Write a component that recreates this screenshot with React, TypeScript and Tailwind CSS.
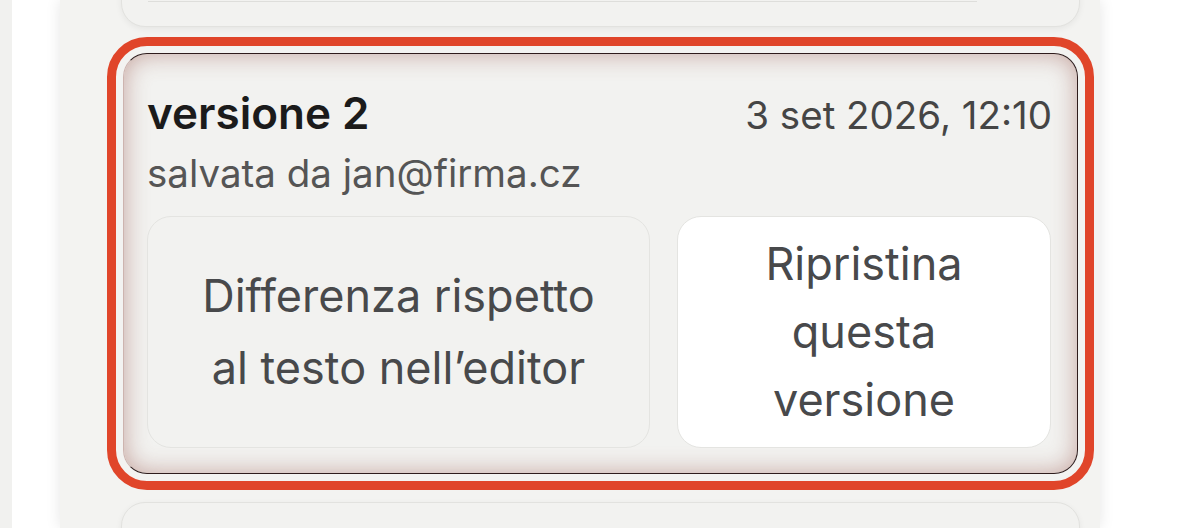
import React from "react";

export default function App() {
  return (
    <div
      className="flex h-[528px] w-[1200px] overflow-hidden bg-white"
      style={{ fontFamily: "Inter, 'Noto Sans', sans-serif" }}
    >
      <div className="w-[12px] shrink-0 bg-[#f1f1ef]" />
      <div className="w-[48px] shrink-0 bg-white" />
      <div className="relative w-[1040px] shrink-0 bg-[#f3f3f1] shadow-[0_0_14px_rgba(0,0,0,0.10)]">
        <div className="flex flex-col pl-[61px] pr-[20px] mt-[-173px]">
          {/* previous card (mostly scrolled out) */}
          <div className="h-[200px] rounded-[24px] border border-[#e2e2df] bg-[#f2f2f0] shadow-[0_2px_6px_rgba(0,0,0,0.06)] px-[26px]">
            <div className="mr-[76px] h-[174px] border-b border-[#dededb]" />
          </div>

          {/* selected card */}
          <div className="mx-[2px] mt-[26px] rounded-[24px] border-[1.5px] border-[#2e1c1c] border-l-[#cdb4af] bg-[#f2f2f0] pl-[23px] pr-[25px] pt-[33px] pb-[25px] shadow-[inset_0_0_24px_rgba(145,70,60,0.45)] outline-[9px] outline-solid outline-[#e0452a] outline-offset-[7px]">
            <div className="flex items-baseline justify-between">
              <div className="text-[44px] leading-[53px] font-semibold text-[#1b1b1b]">versione 2</div>
              <div className="text-[38.5px] leading-[46px] text-[#454545]">3 set 2026, 12:10</div>
            </div>
            <div className="mt-[10px] text-[38.5px] leading-[46px] text-[#555555]">salvata da jan@firma.cz</div>
            <div className="mt-[20px] flex gap-[27px]">
              <button className="flex h-[232px] w-[503px] items-center justify-center rounded-[24px] border-[1.5px] border-[#e4e4e1] bg-[#f2f2f0] px-[10px] text-center text-[45px] leading-[72px] text-[#48494b]">
                Differenza rispetto
                <br />
                al testo nell’editor
              </button>
              <button className="flex h-[232px] w-[374px] items-center justify-center rounded-[24px] border-[1.5px] border-[#e4e4e1] bg-white px-[10px] text-center text-[45px] leading-[68px] text-[#48494b]">
                Ripristina
                <br />
                questa
                <br />
                versione
              </button>
            </div>
          </div>

          {/* next card */}
          <div className="mt-[28px] h-[200px] rounded-[24px] border border-[#e2e2df] bg-[#f2f2f0] shadow-[0_2px_6px_rgba(0,0,0,0.06)]" />
        </div>
      </div>
      <div className="flex-1 bg-white" />
    </div>
  );
}
